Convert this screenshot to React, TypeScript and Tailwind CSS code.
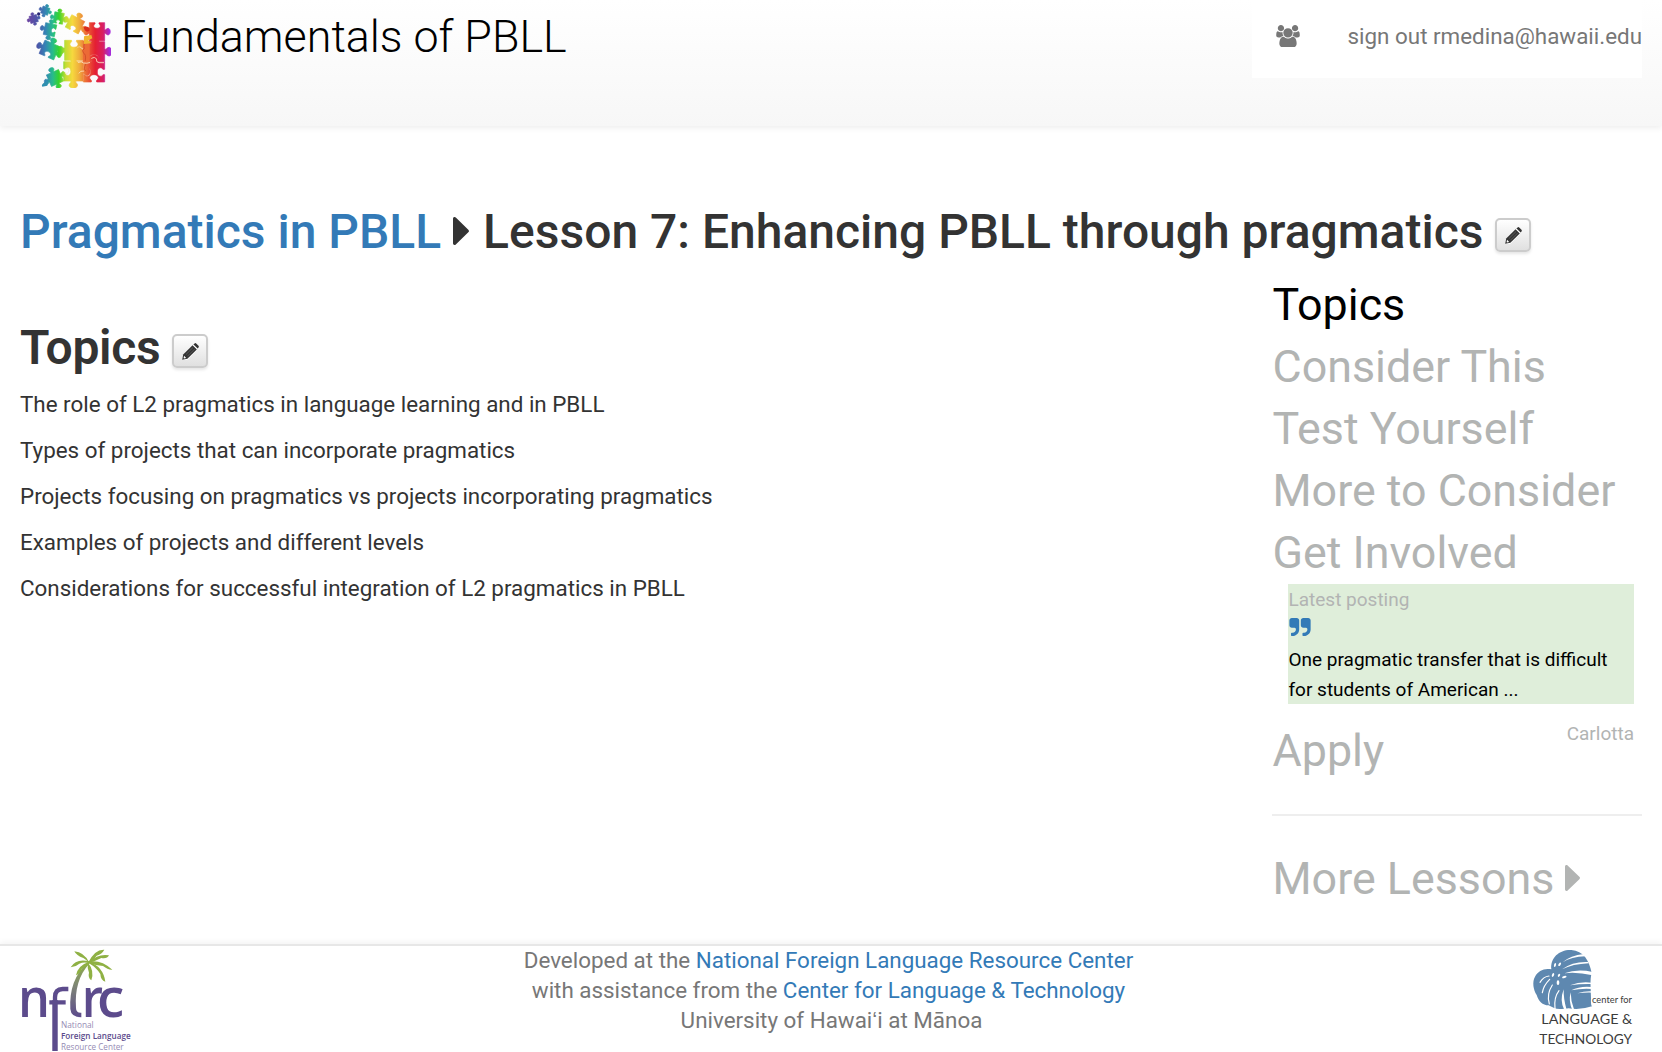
import React from "react";

type Side = -1 | 0 | 1;
type PieceSpec = [number, number, number, number, number, [Side, Side, Side, Side]];

// cx, cy, width, height, rotation, knobs on top / right / bottom / left
const PIECES: PieceSpec[] = [
  [104, 60, 23, 22, -15, [1, 1, 1, 1]],
  [139, 35, 22, 22, 20, [1, 1, 1, 1]],
  [179, 57, 29, 33, 10, [1, 1, -1, 1]],
  [153, 92, 34, 36, 12, [1, -1, 1, 1]],
  [228, 76, 44, 42, 28, [1, 1, -1, 1]],
  [294, 98, 46, 54, 0, [-1, 1, 1, 1]],
  [151, 153, 48, 44, 24, [1, 1, -1, 1]],
  [225, 154, 56, 60, 0, [-1, -1, 1, 1]],
  [285, 158, 64, 60, 0, [1, 1, -1, 1]],
  [168, 237, 40, 38, -24, [1, 1, 1, 1]],
  [223, 217, 58, 58, 0, [1, 1, 1, -1]],
  [285, 219, 64, 60, 0, [1, -1, -1, -1]],
];

function piecePath([cx, cy, w, h, deg, knobs]: PieceSpec): string {
  const a = (deg * Math.PI) / 180;
  const k = Math.min(w, h) * 0.36;
  const point = (x: number, y: number) =>
    `${(cx + x * Math.cos(a) - y * Math.sin(a)).toFixed(1)} ${(cy + x * Math.sin(a) + y * Math.cos(a)).toFixed(1)}`;
  const corners = [
    [-w / 2, -h / 2],
    [w / 2, -h / 2],
    [w / 2, h / 2],
    [-w / 2, h / 2],
  ];
  let d = `M${point(corners[0][0], corners[0][1])}`;
  for (let i = 0; i < 4; i++) {
    const [x0, y0] = corners[i];
    const [x1, y1] = corners[(i + 1) % 4];
    const len = Math.hypot(x1 - x0, y1 - y0);
    const ux = (x1 - x0) / len;
    const uy = (y1 - y0) / len;
    const at = (t: number, o: number) =>
      point((x0 + x1) / 2 + ux * t * k + uy * o * k, (y0 + y1) / 2 + uy * t * k - ux * o * k);
    const s = knobs[i];
    if (s !== 0) {
      d += `L${at(-0.38, 0)}C${at(-0.2, 0.25 * s)} ${at(-0.65, 0.3 * s)} ${at(-0.6, 0.65 * s)}`;
      d += `C${at(-0.5, 1.15 * s)} ${at(0.5, 1.15 * s)} ${at(0.6, 0.65 * s)}`;
      d += `C${at(0.65, 0.3 * s)} ${at(0.2, 0.25 * s)} ${at(0.38, 0)}`;
    }
    d += `L${point(x1, y1)}`;
  }
  return d + "Z";
}

function PuzzleLogo() {
  return (
    <svg className="ml-[24px] mt-[2px] h-[86px] w-[87px] shrink-0" viewBox="75 9 261 258">
      <defs>
        <linearGradient id="rainbow" gradientUnits="userSpaceOnUse" x1="78" y1="0" x2="332" y2="0">
          <stop offset="0" stopColor="#7540a0" />
          <stop offset="0.15" stopColor="#4b56a8" />
          <stop offset="0.24" stopColor="#3583b5" />
          <stop offset="0.33" stopColor="#27bd8a" />
          <stop offset="0.4" stopColor="#35d32c" />
          <stop offset="0.48" stopColor="#c5dc34" />
          <stop offset="0.56" stopColor="#f6d83e" />
          <stop offset="0.64" stopColor="#efae3c" />
          <stop offset="0.72" stopColor="#ec6a36" />
          <stop offset="0.83" stopColor="#e41f32" />
          <stop offset="0.92" stopColor="#d91f62" />
          <stop offset="1" stopColor="#a52cd8" />
        </linearGradient>
      </defs>
      {PIECES.map((p, i) => (
        <path key={i} d={piecePath(p)} fill="url(#rainbow)" stroke="url(#rainbow)" strokeWidth="2" strokeLinejoin="round" />
      ))}
      <path d="M145 260L130 263Q126 258 134 252L148 240Z" fill="#2f8fb0" />
      <path d="M252 126H272V192H252Z" fill="#ec6a36" />
      <g fill="none" strokeLinecap="round" strokeWidth="2.5">
        <path d="M238 190q10-4 16 2q10 2 18-1M278 178q10-6 14 2q-1 10 8 11h14M198 210q12-5 12 6q-3 10-10 8M240 222q4-8 14-6" stroke="#fbe6c8" />
        <path d="M256 133q-3 10 0 16q-10 5-2 14q8 2 5 22M260 196q-8 14 0 20" stroke="#cf4a28" />
      </g>
      <path d="M254 84q12-4 18 4q2 10-8 10q-8-2-10-14Z" fill="#d92c1c" />
      <path d="M255 112l22-4 3 10-12 6 10 9-24 2Z" fill="#efb52f" />
      <circle cx="119" cy="45" r="5" fill="#2b2a78" />
    </svg>
  );
}

function UsersIcon() {
  return (
    <svg className="mr-[48px] mt-[25px] h-[22px] w-6" viewBox="0 0 1920 1792" fill="currentColor">
      <path d="M593 896q-162 5-265 128h-134q-82 0-138-40.5t-56-118.5q0-353 124-353 6 0 43.5 21t97.5 42.5 119 21.5q67 0 133-23-5 37-5 66 0 139 81 256zM1664 1533q0 120-73 189.5t-194 69.5h-874q-121 0-194-69.5t-73-189.5q0-53 3.5-103.5t14-109 26.5-108.5 43-97.5 62-81 85.5-53.5 111.5-20q10 0 43 21.5t73 48 107 48 135 21.5 135-21.5 107-48 73-48 43-21.5q61 0 111.5 20t85.5 53.5 62 81 43 97.5 26.5 108.5 14 109 3.5 103.5zM640 256q0 106-75 181t-181 75-181-75-75-181 75-181 181-75 181 75 75 181zM1344 640q0 159-112.5 271.5t-271.5 112.5-271.5-112.5-112.5-271.5 112.5-271.5 271.5-112.5 271.5 112.5 112.5 271.5zM1920 865q0 78-56 118.5t-138 40.5h-134q-103-123-265-128 81-117 81-256 0-29-5-66 66 23 133 23 59 0 119-21.5t97.5-42.5 43.5-21q124 0 124 353zM1792 256q0 106-75 181t-181 75-181-75-75-181 75-181 181-75 181 75 75 181z" />
    </svg>
  );
}

function QuoteIcon() {
  return (
    <svg className="h-[18px] w-[22px] text-[#337ab7]" viewBox="0 128 1664 1408" fill="currentColor">
      <path d="M768 320v704q0 104-40.5 198.5t-109.5 163.5-163.5 109.5-198.5 40.5h-64q-26 0-45-19t-19-45v-128q0-26 19-45t45-19h64q106 0 181-75t75-181v-32q0-40-28-68t-68-28h-224q-80 0-136-56t-56-136v-384q0-80 56-136t136-56h384q80 0 136 56t56 136z" />
      <path transform="translate(896 0)" d="M768 320v704q0 104-40.5 198.5t-109.5 163.5-163.5 109.5-198.5 40.5h-64q-26 0-45-19t-19-45v-128q0-26 19-45t45-19h64q106 0 181-75t75-181v-32q0-40-28-68t-68-28h-224q-80 0-136-56t-56-136v-384q0-80 56-136t136-56h384q80 0 136 56t56 136z" />
    </svg>
  );
}

function Caret({ className }: { className: string }) {
  return (
    <svg className={className} viewBox="0 0 16 28" fill="currentColor" preserveAspectRatio="none">
      <path d="M0 1.8C0 .2 1.6-.5 2.8.6L15.3 12.7c.9.8.9 1.8 0 2.6L2.8 27.4C1.6 28.5 0 27.8 0 26.2Z" />
    </svg>
  );
}

function EditButton({ className }: { className: string }) {
  return (
    <button
      className={`flex h-[34px] w-9 items-center justify-center rounded-[5px] border-2 border-[#ccc] bg-gradient-to-b from-white to-[#e0e0e0] text-[#333] shadow-[0_2px_3px_rgba(0,0,0,0.1)] ${className}`}
      aria-label="Edit"
    >
      <svg className="h-[17px] w-[17px]" viewBox="0 0 17 17">
        <path d="M0.5 17.5L1.2 12.8L11.4 2.6L15.2 6.4L5 16.6Z" fill="#fff" transform="translate(0 0.6)" />
        <path d="M0.2 16.8L1.2 11.6L10.6 2.2L14.8 6.4L5.4 15.8Z" fill="currentColor" />
        <path d="M11.4 1.4L12.6.4Q13.4-.2 14.2.5L16.5 2.8Q17.2 3.6 16.5 4.4L15.6 5.6Z" fill="currentColor" />
        <path d="M3.8 11.7L11 4.5M5.4 13.3L12.6 6.1" stroke="#777" strokeWidth="0.6" />
        <path d="M2.1 12.8L4.2 14.9L2 15.4L1.6 15Z" fill="#fff" />
        <path d="M11 1.8L15.2 6" stroke="#fff" strokeWidth="0.9" />
      </svg>
    </button>
  );
}

function NflrcLogo() {
  return (
    <svg className="ml-[20px] mt-[2px] h-[106px] w-[115px] overflow-visible" viewBox="60 54 345 318">
      <defs>
        <linearGradient id="trunk" x1="0" y1="0" x2="0" y2="1">
          <stop offset="0" stopColor="#8fae4c" />
          <stop offset="0.45" stopColor="#7d8377" />
          <stop offset="1" stopColor="#5c4b8c" />
        </linearGradient>
      </defs>
      <g fill="#5c4b8c" className="font-['Open_Sans'] font-semibold" fontSize="162">
        <text x="54" y="262" textLength="96" lengthAdjust="spacingAndGlyphs">n</text>
        <text x="245" y="262" textLength="64" lengthAdjust="spacingAndGlyphs">r</text>
        <text x="291" y="262" textLength="82" lengthAdjust="spacingAndGlyphs">c</text>
      </g>
      <path d="M165 363V202Q165 177 188 177H205M148 217H197" fill="none" stroke="#5c4b8c" strokeWidth="13" />
      <path d="M165 363V210" stroke="#5c4b8c" strokeWidth="16" />
      <path d="M262 98Q206 150 211 237Q213 262 244 262V248Q228 249 228 234Q222 150 268 101Z" fill="url(#trunk)" />
      <g fill="#8fb144">
        <path d="M268 98Q252 66 223 64Q229 77 250 84Q256 88 268 98Z" />
        <path d="M265 97Q285 57 313 59Q306 72 290 77Q282 90 266 99Z" />
        <path d="M267 96Q295 70 327 76Q322 87 304 84Q288 92 268 99Z" />
        <path d="M266 95Q303 88 337 119Q324 120 309 108Q288 106 266 99Z" />
        <path d="M268 95Q310 110 316 155Q302 151 301 132Q289 113 267 100Z" />
        <path d="M264 98Q284 122 274 151Q263 143 267 128Q261 112 264 98Z" />
        <path d="M268 94Q228 84 212 112Q227 111 238 101Q252 95 268 100Z" />
        <path d="M266 96Q234 106 228 136Q242 130 245 117Q256 108 268 101Z" />
      </g>
      <g className="font-['Open_Sans']" fill="#5c4b8c" fontSize="26">
        <text x="183" y="295" textLength="98" lengthAdjust="spacingAndGlyphs" opacity="0.65">National</text>
        <text x="183" y="327" textLength="209" lengthAdjust="spacingAndGlyphs" className="font-semibold">Foreign Language</text>
        <text x="183" y="360" textLength="188" lengthAdjust="spacingAndGlyphs" opacity="0.65">Resource Center</text>
      </g>
    </svg>
  );
}

function LanguageTechLogo() {
  return (
    <svg className="mr-[27px] mt-[3px] h-[97px] w-[103px]" viewBox="90 57 309 291">
      <path d="M148 118C144 82 174 58 208 60C244 62 262 92 269 129C263 150 267 176 267 205Q266 226 270 229Q234 241 200 235Q190 237 179 237C163 239 150 232 140 226C121 226 110 213 104 195C94 179 90 156 99 140C108 122 128 113 148 118Z" fill="#5e88b0" />
      <g fill="#fff">
        <path d="M182 97Q205 76 246 72L250 79Q208 80 182 97Z" />
        <path d="M180 118Q212 94 258 96L260 100Q212 102 180 118Z" />
        <path d="M187 130Q225 116 272 126V136Q224 125 187 130Z" />
        <path d="M204 166Q236 153 270 158V162Q236 161 204 166Z" />
        <path d="M208 181Q234 167 270 171V177Q236 175 208 181Z" />
        <path d="M226 190Q250 182 272 184V188Q250 187 226 190Z" />
        <path d="M185 178Q172 212 187 240H194Q184 206 185 178Z" />
        <path d="M206 187Q199 214 211 240L216 238Q206 212 206 187Z" />
      </g>
      <g fill="none" stroke="#fff" strokeLinecap="round" strokeWidth="3.5">
        <path d="M141 138Q124 140 114 157M143 148Q124 167 121 188M151 165Q133 193 142 222M171 182Q155 203 159 236" />
      </g>
      <g fill="#fff">
        <ellipse cx="173" cy="103" rx="3" ry="6" transform="rotate(35 173 103)" />
        <ellipse cx="159" cy="105" rx="3" ry="6" transform="rotate(15 159 105)" />
        <ellipse cx="171" cy="136" rx="3" ry="5" transform="rotate(30 171 136)" />
        <ellipse cx="153" cy="135" rx="3" ry="6" transform="rotate(25 153 135)" />
        <ellipse cx="187" cy="141" rx="3" ry="7" transform="rotate(70 187 141)" />
        <ellipse cx="168" cy="158" rx="4" ry="7" />
      </g>
      <g className="font-[Lato]" fill="#3c3c3c">
        <text x="270" y="220" fontSize="26" textLength="120" lengthAdjust="spacingAndGlyphs">center for</text>
        <text x="118" y="281" fontSize="42" textLength="273" lengthAdjust="spacingAndGlyphs">LANGUAGE &amp;</text>
        <text x="112" y="341" fontSize="42" textLength="278" lengthAdjust="spacingAndGlyphs">TECHNOLOGY</text>
      </g>
    </svg>
  );
}

const TOPICS = [
  "The role of L2 pragmatics in language learning and in PBLL",
  "Types of projects that can incorporate pragmatics",
  "Projects focusing on pragmatics vs projects incorporating pragmatics",
  "Examples of projects and different levels",
  "Considerations for successful integration of L2 pragmatics in PBLL",
];

const SECTIONS = ["Consider This", "Test Yourself", "More to Consider", "Get Involved"];

export default function App() {
  return (
    <div className="flex h-[1052px] w-[1662px] flex-col overflow-hidden whitespace-nowrap bg-white font-[Roboto,sans-serif] text-[22.4px] text-[#333]">
      <header className="flex h-[126px] shrink-0 items-start bg-gradient-to-b from-white to-[#f7f7f7] shadow-[0_2px_6px_rgba(0,0,0,0.07)]">
        <PuzzleLogo />
        <div className="ml-[10px] mt-[7px] text-[44.8px] font-light leading-[60px] text-black">Fundamentals of PBLL</div>
        <div className="ml-auto mr-5 flex h-[78px] w-[390px] items-start justify-end bg-white text-[#777]">
          <UsersIcon />
          <a className="mt-[21px] leading-[30px]">sign out rmedina@hawaii.edu</a>
        </div>
      </header>

      <h1 className="mt-[76px] flex h-[60px] shrink-0 items-start pl-5 text-[48px] font-medium leading-[60px]">
        <a className="text-[#337ab7]">Pragmatics in PBLL</a>
        <Caret className="ml-[12px] mt-[15px] h-7 w-4" />
        <span className="ml-[14px]">Lesson 7: Enhancing PBLL through pragmatics</span>
        <EditButton className="ml-3 mt-4" />
      </h1>

      <div className="flex flex-1 justify-between pl-5 pr-5">
        <main className="pt-[56px]">
          <h2 className="flex items-start text-[48px] font-semibold leading-[60px]">
            <span className="tracking-[-0.3px]">Topics</span>
            <EditButton className="ml-3 mt-4" />
          </h2>
          <div className="mt-[3px] leading-[46px]">
            {TOPICS.map((t) => (
              <p key={t}>{t}</p>
            ))}
          </div>
        </main>

        <aside className="w-[370px] pt-3 text-[44.8px] leading-[62px] text-[#b2b4b3]">
          <div className="pl-[0.5px] text-black">Topics</div>
          {SECTIONS.map((s) => (
            <div key={s} className="pl-[0.5px]">{s}</div>
          ))}
          <div className="ml-4 mr-2 h-[120px] bg-[#dfeeda] pl-[0.5px] pt-px text-[19px] leading-[30px]">
            <div>Latest posting</div>
            <div className="flex h-[30px] items-start pt-[3px]">
              <QuoteIcon />
            </div>
            <div className="text-black">
              One pragmatic transfer that is difficult
              <br />
              for students of American ...
            </div>
          </div>
          <div className="mt-[15px] flex h-[63px] items-start justify-between pl-[0.5px] pr-2">
            <span className="mt-px">Apply</span>
            <span className="text-[19px] leading-[30px]">Carlotta</span>
          </div>
          <hr className="mt-8 border-t-2 border-[#eee]" />
          <div className="mt-8 flex items-start pl-[0.5px]">
            More Lessons
            <Caret className="ml-[11px] mt-[17px] h-[26px] w-[15px]" />
          </div>
        </aside>
      </div>

      <footer className="flex h-[108px] shrink-0 items-start justify-between border-t-2 border-[#e7e7e7] bg-white shadow-[0_-2px_6px_rgba(0,0,0,0.05)]">
        <NflrcLogo />
        <div className="-mt-px mr-[10px] text-center leading-[30px] text-[#777]">
          <div>
            Developed at the <a className="text-[#337ab7]">National Foreign Language Resource Center</a>
          </div>
          <div>
            with assistance from the <a className="text-[#337ab7]">Center for Language &amp; Technology</a>
          </div>
          <div className="pl-[6px]">University of Hawaiʻi at Mānoa</div>
        </div>
        <LanguageTechLogo />
      </footer>
    </div>
  );
}
